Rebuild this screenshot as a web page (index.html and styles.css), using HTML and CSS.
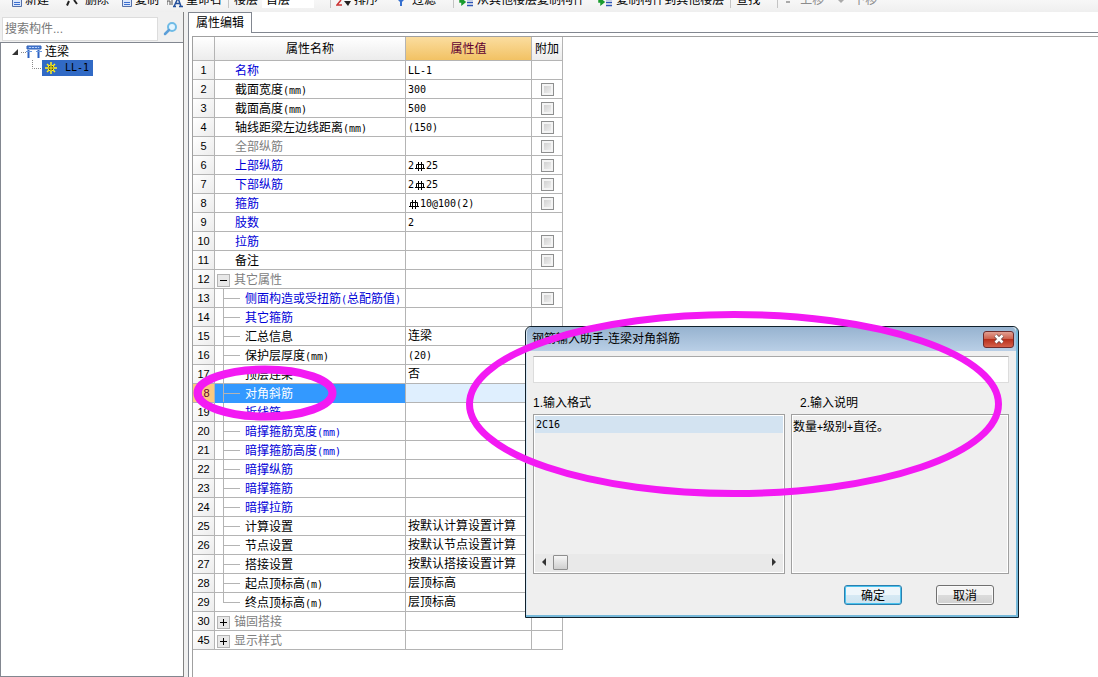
FILE: index.html
```html
<!DOCTYPE html>
<html lang="zh-CN">
<head>
<meta charset="utf-8">
<title>属性编辑</title>
<link rel="stylesheet" href="styles.css">
</head>
<body>
<svg class="defs" width="0" height="0" aria-hidden="true">
  <symbol id="rebar" viewBox="0 0 10 10"><path d="M1.5 3.5h7v4h-7zM3.5 1v9M6.5 1v9M0 7.500h10" fill="none" stroke="#000"/></symbol>
  <symbol id="page" viewBox="0 0 10 8"><path d="M.5 0v6.500h9V0" fill="#dbe7fb" stroke="#5570a8"/><path d="M2 2.500h6M2 4.500h6" stroke="#3c6fd0"/></symbol>
  <symbol id="copyto" viewBox="0 0 15 10"><path d="M1 0v4h4M3 1.500 6 4 3 6.500z" fill="#1a9c2e" stroke="#1a9c2e" stroke-width="1.500"/><path d="M8 1.500h6M8 4.500h6M8 7.500h6" stroke="#2f55b5" stroke-width="1.500"/></symbol>
</svg>
<div class="app">
  <header class="toolbar">
    <button class="tool"><svg width="10" height="8"><use href="#page"/></svg>新建</button>
    <button class="tool delete"><svg width="14" height="8" viewBox="0 0 14 8"><path d="M1 5.500 3 1M8 0l3 4" stroke="#222" stroke-width="2"/></svg>删除</button>
    <button class="tool copy"><svg width="10" height="8"><use href="#page"/></svg>复制</button>
    <button class="tool"><svg width="16" height="10" viewBox="0 0 16 10"><path d="M0 7V3h3v4M5 7V2" fill="none" stroke="#555"/><path d="M7 8.500 11 0l3 8.500M8 5.500h5M6 8.500h3M12 8.500h4" fill="none" stroke="#24509c" stroke-width="1.500"/></svg>重命名</button>
    <span class="sep"></span>
    <button class="tool floor">楼层</button>
    <button class="tool combo">首层</button>
    <span class="sep"></span>
    <button class="tool"><svg width="15" height="8" viewBox="0 0 15 8"><path d="M5 0 1 5h5" fill="none" stroke="#c33" stroke-width="1.500"/><path d="M8 1h7l-3 5z" fill="#222"/></svg>排序</button>
    <button class="tool filter"><svg width="9" height="8" viewBox="0 0 9 8"><path d="M1 0h6L5 2v4H3V2z" fill="#3670cf"/></svg>过滤</button>
    <span class="sep"></span>
    <button class="tool"><svg width="15" height="10"><use href="#copyto"/></svg>从其他楼层复制构件</button>
    <button class="tool"><svg width="15" height="10"><use href="#copyto"/></svg>复制构件到其他楼层</button>
    <span class="sep"></span>
    <button class="tool find">查找</button>
    <span class="sep"></span>
    <button class="tool move"><svg width="10" height="8" viewBox="0 0 10 8"><path d="M3 2h4" stroke="#aaa" stroke-width="2"/></svg>上移</button>
    <button class="tool move"><svg width="10" height="8" viewBox="0 0 10 8"><path d="M2 0h6L5 3z" fill="#aaa"/></svg>下移</button>
  </header>
  <div class="workspace">
    <aside class="sidebar">
      <div class="search">
        <input type="text" placeholder="搜索构件..." aria-label="搜索构件">
        <button class="search-go" aria-label="搜索"><svg width="16" height="16" viewBox="0 0 16 16"><circle cx="9" cy="6" r="4" fill="#e4f5ff" stroke="#6fbbe6" stroke-width="2"/><path d="m6 9-4 4" stroke="#5c9fd8" stroke-width="2.500" stroke-linecap="round"/></svg></button>
      </div>
      <div class="tree">
        <div class="node">
          <svg width="31" height="17" viewBox="0 0 31 17"><path d="M7 6v6H1z" fill="#333"/><path d="M10 9.500h5" stroke="#888" stroke-dasharray="1 1"/><path d="M16 3h14v3H16z" fill="#4f83d8" stroke="#2c5cb5"/><path d="M17.500 7v8M27.500 7v8" stroke="#2c62c4" stroke-width="2"/><path d="M15 8.500h6M25 8.500h6" stroke="#6c98dd"/><path d="M18 4.500h10" stroke="#b9d0fa" stroke-dasharray="2 1"/></svg>
          <span>连梁</span>
        </div>
        <div class="node child">
          <svg width="10" height="16" viewBox="0 0 10 16"><path d="M.5 0v8.500H10" fill="none" stroke="#888" stroke-dasharray="1 1"/></svg>
          <div class="picked"><svg width="12" height="12" viewBox="0 0 12 12"><path d="M6 0v12M0 6h12M2 2l8 8M10 2l-8 8" stroke="#ffee20" stroke-width="1.500"/><circle cx="6" cy="6" r="3" fill="#4a4a10" stroke="#ffee20"/><path d="M6 4v4M4 6h4" stroke="#ffee20"/></svg><span class="n">LL-1</span></div>
        </div>
      </div>
    </aside>
    <main class="editor">
      <div class="tabs"><button class="tab">属性编辑</button><span class="tabline"></span></div>
      <div class="sheet">
        <table class="props">
          <colgroup><col class="c-no"><col class="c-name"><col class="c-val"><col class="c-add"></colgroup>
          <thead><tr><th></th><th>属性名称</th><th class="active">属性值</th><th>附加</th></tr></thead>
          <tbody>
            <tr><th>1</th><td class="top blue">名称</td><td><span class="n">LL-1</span></td><td></td></tr>
            <tr><th>2</th><td class="top">截面宽度<span class="n">(mm)</span></td><td><span class="n">300</span></td><td><input type="checkbox" aria-label="附加 截面宽度"></td></tr>
            <tr><th>3</th><td class="top">截面高度<span class="n">(mm)</span></td><td><span class="n">500</span></td><td><input type="checkbox" aria-label="附加 截面高度"></td></tr>
            <tr><th>4</th><td class="top">轴线距梁左边线距离<span class="n">(mm)</span></td><td><span class="n">(150)</span></td><td><input type="checkbox" aria-label="附加 轴线距梁左边线距离"></td></tr>
            <tr><th>5</th><td class="top gray">全部纵筋</td><td></td><td><input type="checkbox" aria-label="附加 全部纵筋"></td></tr>
            <tr><th>6</th><td class="top blue">上部纵筋</td><td><span class="n">2<svg class="rebar"><use href="#rebar"/></svg>25</span></td><td><input type="checkbox" aria-label="附加 上部纵筋"></td></tr>
            <tr><th>7</th><td class="top blue">下部纵筋</td><td><span class="n">2<svg class="rebar"><use href="#rebar"/></svg>25</span></td><td><input type="checkbox" aria-label="附加 下部纵筋"></td></tr>
            <tr><th>8</th><td class="top blue">箍筋</td><td><span class="n"><svg class="rebar"><use href="#rebar"/></svg>10@100(2)</span></td><td><input type="checkbox" aria-label="附加 箍筋"></td></tr>
            <tr><th>9</th><td class="top blue">肢数</td><td><span class="n">2</span></td><td></td></tr>
            <tr><th>10</th><td class="top blue">拉筋</td><td></td><td><input type="checkbox" aria-label="附加 拉筋"></td></tr>
            <tr><th>11</th><td class="top">备注</td><td></td><td><input type="checkbox" aria-label="附加 备注"></td></tr>
            <tr><th>12</th><td class="group"><button class="fold minus" aria-label="折叠"></button>其它属性</td><td></td><td></td></tr>
            <tr><th>13</th><td class="sub blue">侧面构造或受扭筋<span class="n">(</span>总配筋值<span class="n">)</span></td><td></td><td><input type="checkbox" aria-label="附加 侧面构造或受扭筋"></td></tr>
            <tr><th>14</th><td class="sub blue">其它箍筋</td><td></td><td></td></tr>
            <tr><th>15</th><td class="sub">汇总信息</td><td>连梁</td><td></td></tr>
            <tr><th>16</th><td class="sub">保护层厚度<span class="n">(mm)</span></td><td><span class="n">(20)</span></td><td></td></tr>
            <tr><th>17</th><td class="sub">顶层连梁</td><td>否</td><td></td></tr>
            <tr class="selected"><th>18</th><td class="sub">对角斜筋</td><td></td><td></td></tr>
            <tr><th>19</th><td class="sub blue">折线筋</td><td></td><td></td></tr>
            <tr><th>20</th><td class="sub blue">暗撑箍筋宽度<span class="n">(mm)</span></td><td></td><td></td></tr>
            <tr><th>21</th><td class="sub blue">暗撑箍筋高度<span class="n">(mm)</span></td><td></td><td></td></tr>
            <tr><th>22</th><td class="sub blue">暗撑纵筋</td><td></td><td></td></tr>
            <tr><th>23</th><td class="sub blue">暗撑箍筋</td><td></td><td></td></tr>
            <tr><th>24</th><td class="sub blue">暗撑拉筋</td><td></td><td></td></tr>
            <tr><th>25</th><td class="sub">计算设置</td><td>按默认计算设置计算</td><td></td></tr>
            <tr><th>26</th><td class="sub">节点设置</td><td>按默认节点设置计算</td><td></td></tr>
            <tr><th>27</th><td class="sub">搭接设置</td><td>按默认搭接设置计算</td><td></td></tr>
            <tr><th>28</th><td class="sub">起点顶标高<span class="n">(m)</span></td><td>层顶标高</td><td></td></tr>
            <tr><th>29</th><td class="sub last">终点顶标高<span class="n">(m)</span></td><td>层顶标高</td><td></td></tr>
            <tr><th>30</th><td class="group"><button class="fold" aria-label="展开"></button>锚固搭接</td><td></td><td></td></tr>
            <tr><th>45</th><td class="group"><button class="fold" aria-label="展开"></button>显示样式</td><td></td><td></td></tr>
          </tbody>
        </table>
      </div>
    </main>
  </div>
</div>
<section class="dialog" role="dialog" aria-labelledby="dlg-title">
  <div class="titlebar"><span id="dlg-title">钢筋输入助手-连梁对角斜筋</span>
    <button class="close" aria-label="关闭"><svg width="12" height="10" viewBox="0 0 12 10"><path d="m2.500 1.500 7 7M9.500 1.500l-7 7" stroke="#6b4a4a" stroke-width="4"/><path d="m2.500 1.500 7 7M9.500 1.500l-7 7" stroke="#fff" stroke-width="2.500"/></svg></button>
  </div>
  <div class="dialog-body">
    <input class="entry" type="text" aria-label="钢筋输入">
    <div class="panes">
      <div class="pane format">
        <h2>1.输入格式</h2>
        <div class="box">
          <div class="option"><span class="n">2C16</span></div>
          <div class="scroll"><svg width="6" height="8" viewBox="0 0 6 8"><path d="M5 0v8L1 4z" fill="#333"/></svg><span class="thumb"></span><svg width="6" height="8" viewBox="0 0 6 8"><path d="M1 0v8l4-4z" fill="#333"/></svg></div>
        </div>
      </div>
      <div class="pane notes">
        <h2>2.输入说明</h2>
        <div class="box"><p>数量<span class="n">+</span>级别<span class="n">+</span>直径。</p></div>
      </div>
    </div>
    <div class="actions"><button class="btn primary">确定</button><button class="btn">取消</button></div>
  </div>
</section>
<svg class="marks" width="1098" height="677" viewBox="0 0 1098 677" aria-hidden="true">
  <g fill="none" stroke="#f31af3" stroke-width="7"><ellipse cx="265" cy="393" rx="67.500" ry="23.500" stroke-width="8"/><ellipse cx="734" cy="404" rx="264.500" ry="89.500"/></g>
</svg>
</body>
</html>
```
FILE: styles.css
```css
* { box-sizing: border-box; }
body {
  margin: 0;
  overflow: hidden;
  background: #fff;
  color: #000;
  font: 12px/16px "Liberation Sans", "Noto Sans CJK SC", sans-serif;
}
button, input { font: inherit; color: inherit; margin: 0; }
button { border: 0; padding: 0; background: none; white-space: nowrap; }
.n { font: 10px/10px "DejaVu Sans Mono", monospace; }
.defs { display: block; }
.app { display: flex; flex-direction: column; height: 100vh; }

.toolbar {
  display: flex;
  align-items: flex-end;
  flex: none;
  height: 12px;
  padding: 0 12px 4px;
  overflow: hidden;
  background: linear-gradient(#f7f7f7, #efefef);
}
.tool { display: flex; align-items: flex-end; gap: 3px; margin-right: 13px; height: 16px; }
.tool.delete { margin-left: 4px; gap: 5px; }
.tool.copy { margin-right: 8px; }
.tool svg { flex: none; }
.tool + .sep { margin-left: -7px; }
.sep { width: 1px; height: 16px; margin-right: 5px; background: #c4c4c4; }
.tool.floor { margin-right: 4px; }
.tool.combo { width: 52px; margin-right: 23px; padding-left: 4px; background: #fff; }
.tool.filter { margin-left: 6px; gap: 6px; margin-right: 24px; }
.tool.find { margin-right: 24px; }
.tool.move { gap: 7px; margin-right: 12px; color: #8c8c8c; }

.workspace { display: flex; flex: 1; min-height: 0; background: #f0f0f0; }
.sidebar { display: flex; flex-direction: column; width: 184px; flex: none; border-right: 1px solid #828282; }
.search { display: flex; align-items: center; height: 30px; padding: 5px 3px 1px 2px; gap: 4px; }
.search input {
  flex: 1;
  min-width: 0;
  height: 24px;
  padding: 0 2px;
  border: 1px solid #dcdcdc;
  background: #fff;
}
.search input::placeholder { color: #777; opacity: 1; }
.search-go { display: flex; justify-content: center; width: 18px; }
.tree { flex: 1; border: 1px solid #828790; border-right: 0; background: #fff; }
.node { display: flex; align-items: center; height: 17px; padding-left: 10px; gap: 3px; }
.node.child { height: 16px; padding-left: 31px; gap: 0; }
.picked { display: flex; align-items: center; height: 16px; width: 51px; padding-left: 3px; gap: 8px; background: #316ac5; }

.editor { display: flex; flex-direction: column; flex: 1; min-width: 0; margin-left: 4px; border-left: 1px solid #828790; background: #fff; }
.tabs { display: flex; height: 21px; }
.tab { width: 63px; border: solid #828790; border-width: 1px 1px 0 0; background: #fff; }
.tabline { flex: 1; border-bottom: 1px solid #828790; }
.sheet { flex: 1; margin: 3px 0 0 3px; border: solid #a0a0a0; border-width: 1px 0 0 1px; }

.props { width: 370px; table-layout: fixed; border-collapse: separate; border-spacing: 0; }
.c-no { width: 22px; }
.c-name { width: 191px; }
.c-val { width: 126px; }
.c-add { width: 31px; }
.props th, .props td {
  height: 19px;
  padding: 0 0 0 2px;
  border: solid #b4b4b4;
  border-width: 0 1px 1px 0;
  line-height: 16px;
  white-space: nowrap;
  text-align: left;
  font-weight: normal;
}
.props thead th { height: 24px; padding: 1px 0 0; text-align: center; background: linear-gradient(#fff, #ececec); }
.props thead .active { background: linear-gradient(#fbdd9f, #f2c264); color: #600030; }
.props tbody th { padding: 0; text-align: center; font-size: 11px; background: linear-gradient(135deg, #fff, #ececec); }
.props tbody td:last-child { padding: 0; text-align: center; }
.props td.top { padding: 2px 0 0 20px; }
.props td.group { padding: 2px 0 0 2px; color: #808080; }
.props td.sub {
  padding: 2px 0 0 30px;
  background: linear-gradient(#b4b4b4, #b4b4b4) 8px 0 / 1px 19px no-repeat, linear-gradient(#b4b4b4, #b4b4b4) 8px 9px / 17px 1px no-repeat;
}
.props td.sub.last { background-size: 1px 9px, 17px 1px; }
.props td.blue { color: #0000d8; }
.props td.gray { color: #808080; }
.props .selected th { background: #fbca80; color: #600030; }
.props .selected td { background-color: #dfeffe; }
.props .selected td.sub { background-color: #3399ff; border-bottom-color: #3399ff; color: #fff; }
.props input {
  appearance: none;
  display: block;
  width: 13px;
  height: 13px;
  margin: 0 auto;
  border: 1px solid #8e8f8f;
  background: linear-gradient(135deg, #c9c9c9, #f6f6f6);
  box-shadow: inset 0 0 0 2px #f4f4f4;
}
.rebar { width: 10px; height: 10px; margin: 0 1px; vertical-align: -2px; }
.fold {
  display: inline-block;
  width: 13px;
  height: 13px;
  margin-right: 4px;
  border: 1px solid #b4b4b4;
  vertical-align: -2px;
  background: linear-gradient(#000, #000) center / 7px 1px no-repeat, linear-gradient(#000, #000) center / 1px 7px no-repeat, #e8e8e8;
}
.fold.minus { background: linear-gradient(#000, #000) center / 7px 1px no-repeat, #e8e8e8; }

.dialog {
  position: absolute;
  left: 525px;
  top: 326px;
  width: 494px;
  border: 1px solid #10202c;
  border-radius: 6px 6px 0 0;
  background: #efefef;
  box-shadow: inset -2px -2px 0 #76b9da, inset 1px 1px 0 #d8e8f4;
}
.titlebar {
  display: flex;
  align-items: center;
  justify-content: space-between;
  height: 24px;
  margin: 0 2px 0 1px;
  padding: 0 2px 0 5px;
  border-radius: 5px 5px 0 0;
  background: linear-gradient(#97b3d0, #b9cfe6);
}
.close {
  display: flex;
  align-items: center;
  justify-content: center;
  width: 31px;
  height: 17px;
  border: 1px solid #6e2c2c;
  border-radius: 3px;
  background: linear-gradient(#e2a093, #cc5a45 50%, #b8301c 50%, #d5604a);
}
.dialog-body { padding: 5px 9px 12px 7px; }
.entry { display: block; width: 100%; height: 27px; border: 1px solid #dcdcdc; border-top-color: #a8a8a8; background: #fff; }
.panes { display: flex; gap: 6px; margin-top: 12px; }
.format { flex: 252; }
.notes { flex: 218; }
.pane h2 { margin: 0 0 3px; font: inherit; }
.notes h2 { padding-left: 9px; }
.box {
  display: flex;
  flex-direction: column;
  justify-content: space-between;
  height: 160px;
  padding: 1px;
  border: 1px solid #a0a0a0;
  box-shadow: inset 0 0 0 1px #fff;
}
.box p { margin: 3px 0; }
.option { height: 17px; padding-left: 1px; background: #d3e3f1; }
.scroll { display: flex; align-items: center; height: 18px; padding: 0 6px 2px; gap: 6px; background: #e9e9e9; }
.thumb { width: 15px; height: 15px; margin-right: auto; border: 1px solid #8e8e8e; border-radius: 1px; background: linear-gradient(#f6f6f6, #cfcfcf); }
.actions { display: flex; justify-content: flex-end; gap: 34px; margin-top: 11px; padding-right: 15px; }
.btn {
  width: 58px;
  height: 20px;
  padding-top: 1px;
  border: 1px solid #707070;
  border-radius: 3px;
  background: linear-gradient(#f4f4f4 50%, #dcdcdc 50%, #d0d0d0);
  box-shadow: inset 0 0 0 1px #fafafa;
  line-height: 16px;
}
.btn.primary { border-color: #2c7fae; background: linear-gradient(#eef6fb 50%, #d6e9f4 50%, #cfe4f0); box-shadow: inset 0 0 0 1px #48c2ee; }
.marks { position: absolute; left: 0; top: 0; pointer-events: none; }
```
